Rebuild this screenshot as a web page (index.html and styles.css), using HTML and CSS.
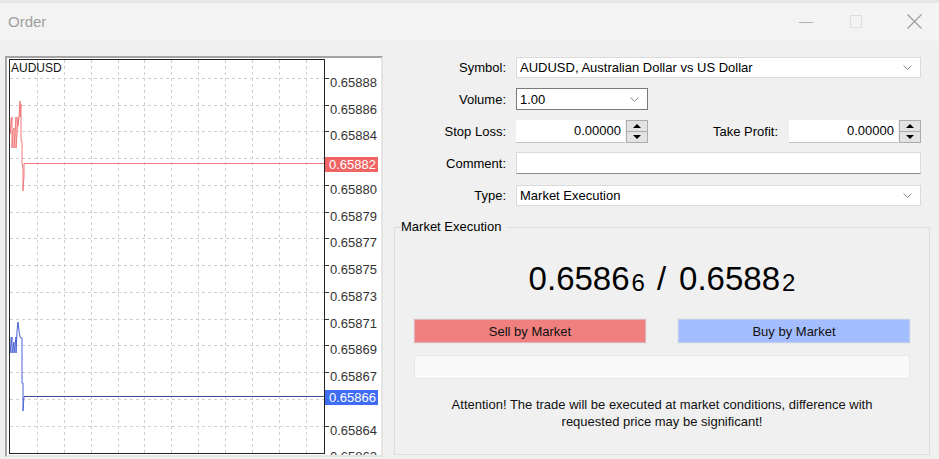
FILE: index.html
```html
<!DOCTYPE html>
<html lang="en">
<head>
  <meta charset="UTF-8" />
  <meta name="viewport" content="width=device-width, initial-scale=1.0" />
  <title>Order</title>
  <link rel="stylesheet" href="styles.css">
</head>
<body>

  <div class="window">
    <div class="titlebar">
      <span class="title">Order</span>
      <div class="controls">
        <svg class="ctl-min" width="14" height="14" viewBox="0 0 14 14"><line x1="0" y1="7.5" x2="14" y2="7.5" stroke="#b3b3b3" stroke-width="1"/></svg>
        <svg class="ctl-max" width="12" height="14" viewBox="0 0 12 14"><rect x="0.5" y="0.5" width="11" height="12" fill="none" stroke="#dedede" stroke-width="1"/></svg>
        <svg class="ctl-close" width="15" height="15" viewBox="0 0 15 15"><path d="M0.5 0.5 L14.5 14.5 M14.5 0.5 L0.5 14.5" stroke="#9a9a9a" stroke-width="1.1" fill="none"/></svg>
      </div>
    </div>

    <div class="content">
      <div class="chart">
        <svg class="chart-svg" width="374" height="397" viewBox="0 0 374 397">
          <g stroke="#cfcfcf" stroke-width="1" stroke-dasharray="3,3">
            <line x1="3" y1="20.5" x2="317" y2="20.5"/>
            <line x1="3" y1="47.5" x2="317" y2="47.5"/>
            <line x1="3" y1="73.5" x2="317" y2="73.5"/>
            <line x1="3" y1="100.5" x2="317" y2="100.5"/>
            <line x1="3" y1="127.5" x2="317" y2="127.5"/>
            <line x1="3" y1="154.5" x2="317" y2="154.5"/>
            <line x1="3" y1="180.5" x2="317" y2="180.5"/>
            <line x1="3" y1="207.5" x2="317" y2="207.5"/>
            <line x1="3" y1="234.5" x2="317" y2="234.5"/>
            <line x1="3" y1="261.5" x2="317" y2="261.5"/>
            <line x1="3" y1="287.5" x2="317" y2="287.5"/>
            <line x1="3" y1="314.5" x2="317" y2="314.5"/>
            <line x1="3" y1="341.5" x2="317" y2="341.5"/>
            <line x1="3" y1="368.5" x2="317" y2="368.5"/>
            <line x1="30.5" y1="2" x2="30.5" y2="395"/>
            <line x1="57.5" y1="2" x2="57.5" y2="395"/>
            <line x1="84.5" y1="2" x2="84.5" y2="395"/>
            <line x1="111.5" y1="2" x2="111.5" y2="395"/>
            <line x1="137.5" y1="2" x2="137.5" y2="395"/>
            <line x1="164.5" y1="2" x2="164.5" y2="395"/>
            <line x1="191.5" y1="2" x2="191.5" y2="395"/>
            <line x1="218.5" y1="2" x2="218.5" y2="395"/>
            <line x1="245.5" y1="2" x2="245.5" y2="395"/>
            <line x1="272.5" y1="2" x2="272.5" y2="395"/>
            <line x1="299.5" y1="2" x2="299.5" y2="395"/>
          </g>

          <g stroke="#333" stroke-width="1">
            <line x1="317" y1="20.5" x2="322" y2="20.5"/>
            <line x1="317" y1="47.5" x2="322" y2="47.5"/>
            <line x1="317" y1="73.5" x2="322" y2="73.5"/>
            <line x1="317" y1="100.5" x2="322" y2="100.5"/>
            <line x1="317" y1="127.5" x2="322" y2="127.5"/>
            <line x1="317" y1="154.5" x2="322" y2="154.5"/>
            <line x1="317" y1="180.5" x2="322" y2="180.5"/>
            <line x1="317" y1="207.5" x2="322" y2="207.5"/>
            <line x1="317" y1="234.5" x2="322" y2="234.5"/>
            <line x1="317" y1="261.5" x2="322" y2="261.5"/>
            <line x1="317" y1="287.5" x2="322" y2="287.5"/>
            <line x1="317" y1="314.5" x2="322" y2="314.5"/>
            <line x1="317" y1="341.5" x2="322" y2="341.5"/>
            <line x1="317" y1="368.5" x2="322" y2="368.5"/>
          </g>

          <g class="axis-labels">
            <text x="323" y="28.5">0.65888</text>
            <text x="323" y="55.5">0.65886</text>
            <text x="323" y="81.5">0.65884</text>
            <text x="323" y="135.5">0.65880</text>
            <text x="323" y="162.5">0.65879</text>
            <text x="323" y="188.5">0.65877</text>
            <text x="323" y="215.5">0.65875</text>
            <text x="323" y="242.5">0.65873</text>
            <text x="323" y="269.5">0.65871</text>
            <text x="323" y="295.5">0.65869</text>
            <text x="323" y="322.5">0.65867</text>
            <text x="323" y="376.5">0.65864</text>
            <text x="323" y="403">0.65862</text>
          </g>

          <polyline fill="none" stroke="#f07878" stroke-width="1"
            points="3,60 3,76 4,68 5,59 5,90 6,73 7,70 7,90 8,76 9,59 9,90 10,76 11,59 11,68 12,59 13,43 13,59 14,46 14,83 15,83 15,105 16,111 16,133 17,118 17,105.5"/>
          <line class="crisp" x1="17" y1="105.5" x2="317" y2="105.5" stroke="#f07a7a" stroke-width="1"/>
          <polyline fill="none" stroke="#4b63d6" stroke-width="1"
            points="3,279 3,295 5,279 5,295 7,284 7,295 9,279 9,295 10,273 11,264 12,273 13,279 14,280 15,280 15,325 16,325 16,353 17,338.5"/>
          <line class="crisp" x1="17" y1="338.5" x2="317" y2="338.5" stroke="#3c4f9c" stroke-width="1"/>

          <rect x="2.5" y="1.5" width="315" height="394" fill="none" stroke="#222" stroke-width="1"/>

          <rect x="318" y="99" width="53" height="15" fill="#f06464"/>
          <text class="price-tag" x="322" y="111">0.65882</text>
          <rect x="318" y="332" width="53" height="15" fill="#3f6cf2"/>
          <text class="price-tag" x="322" y="344">0.65866</text>
        </svg>
        <span class="chart-symbol">AUDUSD</span>
      </div>

      <div class="order-form">
        <div class="row">
          <label class="field-label">Symbol:</label>
          <div class="combo combo-wide">
            <span>AUDUSD, Australian Dollar vs US Dollar</span>
            <svg class="chevron" width="9" height="5" viewBox="0 0 9 5"><polyline points="0.5,0.5 4.5,4.5 8.5,0.5" fill="none" stroke="#8a8a8a" stroke-width="1"/></svg>
          </div>
        </div>

        <div class="row">
          <label class="field-label">Volume:</label>
          <div class="combo combo-volume">
            <span>1.00</span>
            <svg class="chevron" width="9" height="5" viewBox="0 0 9 5"><polyline points="0.5,0.5 4.5,4.5 8.5,0.5" fill="none" stroke="#8a8a8a" stroke-width="1"/></svg>
          </div>
        </div>

        <div class="row">
          <label class="field-label">Stop Loss:</label>
          <div class="spin-field">
            <div class="spin-value">0.00000</div>
            <div class="spinner">
              <div class="spin-btn"><span class="tri-up"></span></div>
              <div class="spin-btn"><span class="tri-down"></span></div>
            </div>
          </div>
          <label class="field-label tp-label">Take Profit:</label>
          <div class="spin-field">
            <div class="spin-value">0.00000</div>
            <div class="spinner">
              <div class="spin-btn"><span class="tri-up"></span></div>
              <div class="spin-btn"><span class="tri-down"></span></div>
            </div>
          </div>
        </div>

        <div class="row">
          <label class="field-label">Comment:</label>
          <div class="text-box"></div>
        </div>

        <div class="row">
          <label class="field-label">Type:</label>
          <div class="combo combo-wide">
            <span>Market Execution</span>
            <svg class="chevron" width="9" height="5" viewBox="0 0 9 5"><polyline points="0.5,0.5 4.5,4.5 8.5,0.5" fill="none" stroke="#8a8a8a" stroke-width="1"/></svg>
          </div>
        </div>

        <fieldset class="execution">
          <legend>Market Execution</legend>
          <div class="quote">0.6586<span class="pip">6</span><span class="slash">/</span>0.6588<span class="pip">2</span></div>
          <div class="trade-buttons">
            <button class="trade-btn sell-btn">Sell by Market</button>
            <button class="trade-btn buy-btn">Buy by Market</button>
          </div>
          <div class="progress"></div>
          <p class="attention">Attention! The trade will be executed at market conditions, difference with<br>requested price may be significant!</p>
        </fieldset>
      </div>
    </div>
  </div>

</body>
</html>
```

FILE: styles.css
```css
body {
  margin: 0;
  background-color: #f0f0f0;
  font-family: "Liberation Sans", Arial, sans-serif;
  font-size: 13px;
  color: #000;
}

.window {
  width: 939px;
  height: 459px;
  overflow: hidden;
}

.titlebar {
  display: flex;
  align-items: center;
  height: 37px;
  border-top: 3px solid #e6e6e6;
  background-color: #f3f3f3;
  padding-left: 8px;
  padding-bottom: 1px;
  box-sizing: content-box;
}

.title {
  font-size: 15px;
  color: #a0a0a0;
  margin-top: -1px;
}

.controls {
  margin-left: auto;
  display: flex;
  align-items: center;
  padding-right: 17px;
}

.ctl-min {
  margin-right: 37px;
}

.ctl-max {
  margin-right: 45px;
}

.content {
  display: flex;
  align-items: flex-start;
  padding-left: 5px;
}

.chart {
  position: relative;
  margin-top: 15px;
  width: 374px;
  height: 397px;
  border: 2px solid;
  border-color: #a3a3a3 #e4e4e4 #e4e4e4 #a3a3a3;
  background-color: white;
}

.chart-svg {
  display: block;
}

.crisp {
  shape-rendering: crispEdges;
}

.axis-labels text {
  font-family: "Liberation Sans", Arial, sans-serif;
  font-size: 13px;
  fill: #333;
}

.price-tag {
  font-family: "Liberation Sans", Arial, sans-serif;
  font-size: 13px;
  fill: white;
}

.chart-symbol {
  position: absolute;
  left: 4px;
  top: 3px;
  font-size: 12px;
  color: #111;
}

.order-form {
  margin-left: 11px;
  width: 536px;
  padding-top: 15px;
  display: flex;
  flex-direction: column;
  gap: 10px;
}

.row {
  display: flex;
  align-items: center;
  height: 22px;
  padding-right: 9px;
}

.field-label {
  width: 112px;
  margin-right: 10px;
  text-align: right;
  flex-shrink: 0;
}

.combo {
  display: flex;
  align-items: center;
  height: 21px;
  background-color: white;
  border: 1px solid #dadada;
  box-sizing: border-box;
  padding: 0 3px;
}

.combo-wide {
  flex: 1;
}

.combo-volume {
  width: 132px;
  height: 22px;
  border-color: #7a7a7a;
}

.chevron {
  margin-left: auto;
  margin-right: 5px;
}

.spin-field {
  display: flex;
  width: 132px;
  height: 23px;
}

.spin-value {
  flex: 1;
  background-color: white;
  border-bottom: 1px solid #c4c4c4;
  text-align: right;
  padding-right: 4px;
  line-height: 22px;
  box-sizing: border-box;
}

.spinner {
  width: 22px;
  display: flex;
  flex-direction: column;
  margin-left: 1px;
}

.spin-btn {
  flex: 1;
  display: flex;
  align-items: center;
  justify-content: center;
  border: 1px solid #adadad;
  background-color: #e3e3e3;
  box-sizing: border-box;
}

.spin-btn + .spin-btn {
  border-top: none;
}

.tri-up {
  width: 0;
  height: 0;
  border-left: 4px solid transparent;
  border-right: 4px solid transparent;
  border-bottom: 4px solid #000;
}

.tri-down {
  width: 0;
  height: 0;
  border-left: 4px solid transparent;
  border-right: 4px solid transparent;
  border-top: 4px solid #000;
}

.tp-label {
  width: auto;
  margin-left: auto;
  margin-right: 11px;
}

.text-box {
  flex: 1;
  height: 22px;
  background-color: white;
  border: 1px solid #dadada;
  border-bottom-color: #8c8c8c;
  box-sizing: border-box;
}

.execution {
  margin: 3px 0 0 0;
  padding: 0 19px 24px 19px;
  border: 1px solid #dcdcdc;
  min-width: 0;
}

.execution legend {
  margin-left: -13px;
  padding: 0 6px 0 0;
  line-height: 16px;
}

.quote {
  margin-top: 26px;
  text-align: center;
  font-size: 33px;
  line-height: 36px;
  color: #000;
}

.pip {
  font-size: 24px;
  vertical-align: -1px;
  margin-left: 2px;
}

.slash {
  margin: 0 13px 0 12px;
}

.trade-buttons {
  display: flex;
  justify-content: space-between;
  margin-top: 18px;
}

.trade-btn {
  width: 232px;
  height: 24px;
  font-family: "Liberation Sans", Arial, sans-serif;
  font-size: 13px;
  color: #111;
  border: 1px solid #e0b4b4;
  padding: 0;
  box-shadow: 0 0 0 1px #e9e9e9;
}

.sell-btn {
  background-color: #f08080;
}

.buy-btn {
  background-color: #a4bdff;
  border-color: #bfcdf2;
}

.progress {
  margin-top: 12px;
  height: 24px;
  background-color: #f9f9f9;
  border: 1px solid #e8e8e8;
  border-radius: 2px;
  box-sizing: border-box;
}

.attention {
  margin: 17px 0 0 0;
  text-align: center;
  line-height: 17px;
  color: #111;
}
```
